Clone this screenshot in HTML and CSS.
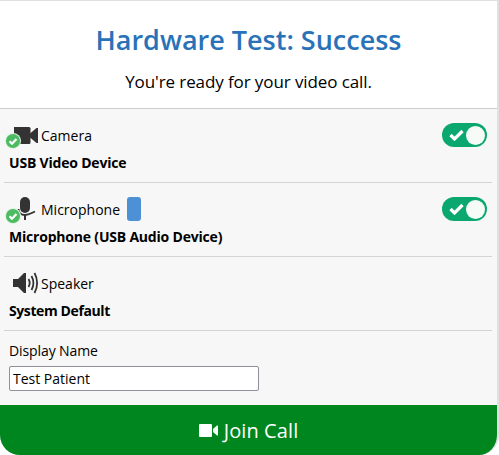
FILE: index.html
```html
<!DOCTYPE html>
<html lang="en">

<head>
  <meta charset="UTF-8">
  <title>Hardware Test</title>
  <link rel="stylesheet" href="styles.css">
</head>

<body>
  <div class="card">
    <div class="header">
      <h1>Hardware Test: Success</h1>
      <p>You're ready for your video call.</p>
    </div>
    <div class="panel">
      <div class="device">
        <div class="device-top">
          <span class="icon">
            <svg width="25" height="17" viewBox="0 0 25 17">
              <path fill="#333" d="M1 0h15a1.500 1.500 0 0 1 1.500 1.500v14A1.500 1.500 0 0 1 16 17H1z" />
              <path fill="#333" d="M17 6.500 23.500 1h1.500v15h-1.500L17 10.500z" />
            </svg>
            <svg class="ok" width="16" height="16" viewBox="0 0 17 17">
              <circle cx="8.500" cy="8.500" r="8.500" fill="#dff3e3" />
              <circle cx="8.500" cy="8.500" r="7.500" fill="#4cbb62" />
              <path fill="none" stroke="#fff" stroke-width="2.400" d="m4.800 8.800 2.600 2.600 4.800-5" />
            </svg>
          </span>
          <span class="device-name">Camera</span>
          <span class="toggle">
            <svg width="15" height="12" viewBox="0 0 15 12">
              <path fill="none" stroke="#fff" stroke-width="3.200" d="m1.500 6 4 4 8-8" />
            </svg>
            <span class="knob"></span>
          </span>
        </div>
        <div class="device-value">USB Video Device</div>
      </div>
      <div class="device">
        <div class="device-top">
          <span class="icon">
            <svg width="26" height="26" viewBox="0 0 26 26">
              <rect x="7" y="1" width="10" height="16" rx="5" fill="#333" />
              <path fill="none" stroke="#333" stroke-width="1.800" d="M5.500 13c0 3.500 2.500 6 6.500 6s6.500-2 10-3.500" />
              <rect x="11" y="19" width="2" height="5" fill="#333" />
            </svg>
            <svg class="ok ok-mic" width="16" height="16" viewBox="0 0 17 17">
              <circle cx="8.500" cy="8.500" r="8.500" fill="#dff3e3" />
              <circle cx="8.500" cy="8.500" r="7.500" fill="#4cbb62" />
              <path fill="none" stroke="#fff" stroke-width="2.400" d="m4.800 8.800 2.600 2.600 4.800-5" />
            </svg>
          </span>
          <span class="device-name">Microphone</span>
          <span class="level"></span>
          <span class="toggle">
            <svg width="15" height="12" viewBox="0 0 15 12">
              <path fill="none" stroke="#fff" stroke-width="3.200" d="m1.500 6 4 4 8-8" />
            </svg>
            <span class="knob"></span>
          </span>
        </div>
        <div class="device-value">Microphone (USB Audio Device)</div>
      </div>
      <div class="device">
        <div class="device-top">
          <span class="icon">
            <svg width="26" height="24" viewBox="0 0 26 24">
              <path fill="#333" d="M0 8h5l6-6h2v20h-2l-6-6H0z" />
              <path fill="none" stroke="#333" stroke-width="1.800" d="M15.500 8c1.500 2.500 1.500 5.500 0 8" />
              <path fill="none" stroke="#333" stroke-width="1.800" d="M18.500 5c2.500 4.500 2.500 9.500 0 14" />
              <path fill="none" stroke="#333" stroke-width="1.800" d="M21.500 2c3.500 6 3.500 14 0 20" />
            </svg>
          </span>
          <span class="device-name">Speaker</span>
        </div>
        <div class="device-value value-tight">System Default</div>
      </div>
      <div class="name-field">
        <label for="display-name">Display Name</label>
        <input id="display-name" type="text" value="Test Patient">
      </div>
    </div>
    <button class="join" type="button">
      <svg width="19" height="13" viewBox="0 0 19 13">
        <path fill="#fff" d="M1 0h11a1 1 0 0 1 1 1v11a1 1 0 0 1-1 1H1a1 1 0 0 1-1-1V1a1 1 0 0 1 1-1z" />
        <path fill="#fff" d="m14 5 4-3.500h1v10h-1l-4-3.500z" />
      </svg>
      <span class="join-label"><u>J</u>oin Call</span>
    </button>
  </div>
</body>

</html>
```

FILE: styles.css
```css
html,
body {
  margin: 0;
  padding: 0;
}

body {
  width: 499px;
  height: 455px;
  overflow: hidden;
  background: #fff;
  font-family: "Open Sans", "Noto Sans", sans-serif;
  color: #000;
}

.card {
  box-sizing: border-box;
  width: 499px;
  height: 455px;
  display: flex;
  flex-direction: column;
  border-top: 1px solid #e0e0e0;
  border-right: 2px solid #e0e0e0;
  border-radius: 0 0 20px 20px;
  overflow: hidden;
}

.header {
  height: 108px;
  box-sizing: border-box;
  padding-top: 21px;
  text-align: center;
  border-bottom: 1px solid #ccc;
}

.header h1 {
  margin: 0;
  font-size: 27px;
  line-height: 36px;
  font-weight: 600;
  color: #2a72b8;
}

.header p {
  margin: 13px 0 0;
  font-size: 17px;
  line-height: 22px;
  letter-spacing: -0.1px;
}

.panel {
  flex: 1;
  background: #f7f7f7;
  padding: 0 5px 0 4px;
}

.device {
  height: 74px;
  box-sizing: border-box;
  padding: 13px 0 0 5px;
  border-bottom: 1px solid #d4d4d4;
}

.device-top {
  height: 26px;
  display: flex;
  align-items: center;
  gap: 2px;
}

.icon {
  width: 26px;
  height: 26px;
  position: relative;
  display: flex;
  align-items: center;
  margin-left: 4px;
}

.ok {
  position: absolute;
  left: -8px;
  top: 11px;
}

.ok-mic {
  top: 12px;
}

.device-name {
  font-size: 14px;
}

.level {
  width: 14px;
  height: 24px;
  border-radius: 3px;
  background: #4e90d6;
  margin-left: 5px;
}

.toggle {
  width: 45px;
  height: 24px;
  margin-left: auto;
  margin-right: 5px;
  border-radius: 12px;
  background: #0aa86f;
  display: flex;
  align-items: center;
  justify-content: space-between;
  box-sizing: border-box;
  padding: 0 2px 0 7px;
}

.knob {
  width: 19px;
  height: 19px;
  border-radius: 50%;
  background: #f6fbf8;
}

.device-value {
  margin-top: 5px;
  font-size: 14px;
  line-height: 20px;
  font-weight: 700;
  letter-spacing: -0.2px;
}

.value-tight {
  letter-spacing: -0.4px;
}

.name-field {
  padding: 10px 0 0 5px;
}

.name-field label {
  display: block;
  font-size: 14px;
  line-height: 20px;
  letter-spacing: -0.1px;
}

.name-field input {
  display: block;
  box-sizing: border-box;
  width: 250px;
  height: 25px;
  margin-top: 5px;
  padding: 0 3px;
  border: 1px solid #8f8f9d;
  border-radius: 2px;
  background: #fff;
  font-family: inherit;
  font-size: 14px;
  color: #000;
}

.join {
  flex: none;
  height: 50px;
  width: 100%;
  border: 0;
  background: #00861e;
  color: #fff;
  font-family: inherit;
  font-size: 20px;
  letter-spacing: 0.1px;
  display: flex;
  align-items: center;
  justify-content: center;
  gap: 6px;
  padding: 0;
}

.join-label {
  padding-top: 1px;
}
```
